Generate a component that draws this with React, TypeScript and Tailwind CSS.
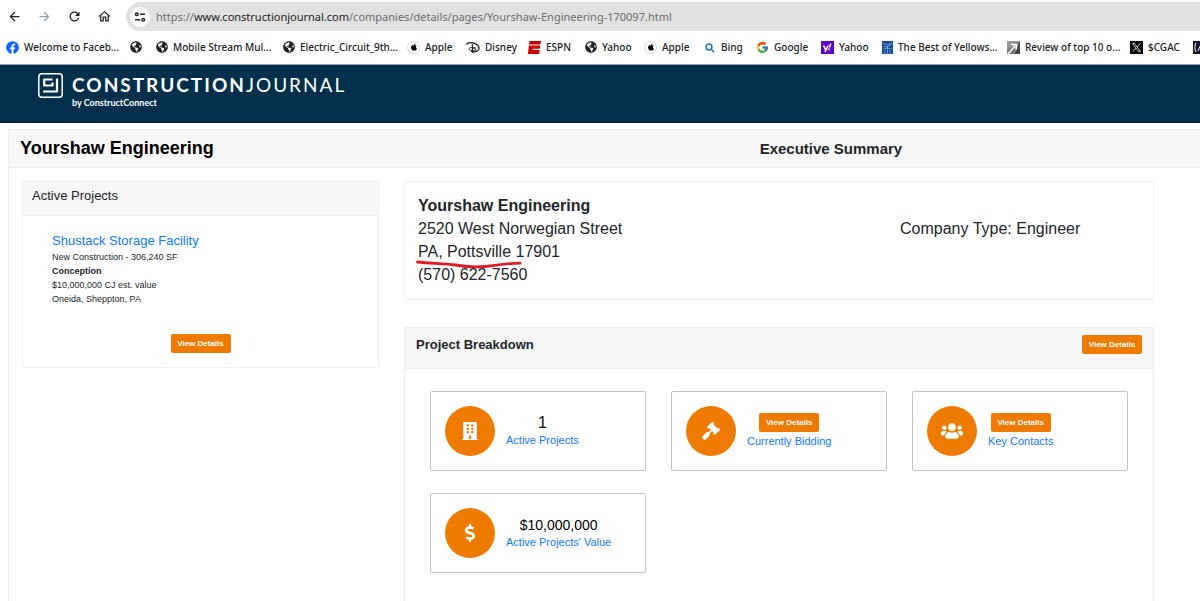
import type { ReactNode } from "react";
import { FaApple, FaBuilding, FaDollarSign, FaFacebook, FaGavel, FaGlobeAmericas, FaUsers } from "react-icons/fa";
import { FcGoogle } from "react-icons/fc";
import { MdArrowBack, MdArrowForward, MdOutlineHome, MdRefresh } from "react-icons/md";

const GlobeIcon = () => <FaGlobeAmericas className="size-3 text-[#202124]" />;

const AppleIcon = () => (
  <span className="flex size-[13px] items-center justify-center rounded-full border border-gray-300 bg-white">
    <FaApple className="size-2 text-black" />
  </span>
);

const DisneyIcon = () => (
  <svg viewBox="0 0 14 13" className="h-[13px] w-[14px]" fill="none" stroke="#222" strokeLinecap="round">
    <path d="M.7 3.2C1.5 1.2 6 1 9.2 2.6c3.4 1.700 4.600 4.200 3.300 6.200-1.300 1.900-4.600 2.700-6.700 1.700" strokeWidth="1.300" />
    <path d="M6.400 3.600v7.800" strokeWidth="1.300" />
    <path d="M9.500 7c-2-1-6.500-.8-6.500.9 0 1.300 2.700 2.200 4.800 1.900 1.700-.3 2.500-1 2-1.700-.4-.5-1.600-.5-2.600-.3" />
  </svg>
);

const EspnIcon = () => (
  <svg viewBox="0 0 13 13" className="size-[13px]" fill="#cc0000">
    <path d="M1.500 0H13l-.5 3.500H1Z" />
    <path d="M.9 4.500h11.400l-.5 3.300H4.900l-.2 1.200h7l-.5 4H0Z" />
  </svg>
);

const BingIcon = () => (
  <svg viewBox="0 0 12 13" className="h-[13px] w-3" fill="none" stroke="#1a73c8" strokeWidth="1.500" strokeLinecap="round">
    <circle cx="5" cy="6" r="2.900" />
    <path d="m7.300 8.300 2.400 2.400" />
  </svg>
);

const YahooIcon = () => (
  <svg viewBox="0 0 13 13" className="size-[13px]">
    <path d="M0 0h13v13H0Z" fill="#5f01d1" />
    <path d="m2.500 4.500 2 4M7 4.500l-3 6.500M9.800 2.500 8.400 6.500" stroke="#fff" strokeWidth="1.600" />
    <circle cx="7.800" cy="8.300" r="1" fill="#fff" />
  </svg>
);

const YellowstoneIcon = () => (
  <svg viewBox="0 0 11 13" className="h-[13px] w-[11px]">
    <path d="M0 0h11v13H0Z" fill="#174a94" />
    <path d="m1 2 4 2 5-2M1 5l4 1 5-3M1 8l4-1 5 1M3 13V9m2.500 4V5M8 13V9" fill="none" stroke="#8db7e3" strokeWidth=".7" />
  </svg>
);

const ReviewIcon = () => (
  <svg viewBox="0 0 13 13" className="size-[13px]">
    <path d="M0 0h13v13H0Z" fill="#777" />
    <path d="M0 0h13L0 9Z" fill="#999" />
    <path d="M13 0v13H8Z" fill="#444" />
    <path d="m1 13 7-8M4 3.500l5.500.2-.5 5" fill="none" stroke="#fff" strokeWidth="1.600" />
  </svg>
);

const XIcon = () => (
  <svg viewBox="0 0 13 13" className="size-[13px]" fill="none" stroke="#ddd">
    <path d="M0 0h13v13H0Z" fill="#000" stroke="none" />
    <path d="M2.500 2.500h2l6 8h-2Z" strokeWidth=".9" />
    <path d="m10.300 2.500-3.400 3.700M6 7.300l-3.300 3.200" />
  </svg>
);

const CodeIcon = () => (
  <svg viewBox="0 0 13 13" className="size-[13px]" fill="none" stroke="#fff">
    <path d="M0 0h13v13H0Z" fill="#15132b" stroke="none" />
    <path d="M3 2C1.500 4 1.500 9 3 11M5 10l3-7 3 7" />
  </svg>
);

const bookmarks: { label: string; icon: ReactNode; width: string }[] = [
  { label: "Welcome to Faceb...", icon: <FaFacebook className="size-[13px] text-[#0866ff]" />, width: "w-[124px]" },
  { label: "", icon: <GlobeIcon />, width: "w-[26px]" },
  { label: "Mobile Stream Mul...", icon: <GlobeIcon />, width: "w-[127px]" },
  { label: "Electric_Circuit_9th...", icon: <GlobeIcon />, width: "w-[124px]" },
  { label: "Apple", icon: <AppleIcon />, width: "w-[59px]" },
  { label: "Disney", icon: <DisneyIcon />, width: "w-[62px]" },
  { label: "ESPN", icon: <EspnIcon />, width: "w-[57px]" },
  { label: "Yahoo", icon: <GlobeIcon />, width: "w-[59px]" },
  { label: "Apple", icon: <AppleIcon />, width: "w-[60px]" },
  { label: "Bing", icon: <BingIcon />, width: "w-[52px]" },
  { label: "Google", icon: <FcGoogle className="size-[13px]" />, width: "w-[65px]" },
  { label: "Yahoo", icon: <YahooIcon />, width: "w-[61px]" },
  { label: "The Best of Yellows...", icon: <YellowstoneIcon />, width: "w-[125px]" },
  { label: "Review of top 10 o...", icon: <ReviewIcon />, width: "w-[123px]" },
  { label: "$CGAC", icon: <XIcon />, width: "w-[63px]" },
  { label: "", icon: <CodeIcon />, width: "w-[13px]" },
];

const BrowserBar = () => (
  <div className="overflow-hidden border-b border-gray-400 bg-white font-['Noto_Sans',sans-serif]">
    <div className="flex items-center pt-0.5">
      <div className="flex w-[126px] shrink-0 items-center gap-[15px] pl-[7px] text-[#202124]">
        <button aria-label="Back"><MdArrowBack className="size-[15px]" /></button>
        <button aria-label="Forward" className="text-gray-400"><MdArrowForward className="size-[15px]" /></button>
        <button aria-label="Reload"><MdRefresh className="size-[15px]" /></button>
        <button aria-label="Home"><MdOutlineHome className="size-[15px]" /></button>
      </div>
      <div className="flex h-[29px] flex-1 items-center gap-[6px] rounded-l-full bg-[#e1e1e1] pl-1">
        <button aria-label="Site information" className="flex size-5 shrink-0 items-center justify-center rounded-full bg-white">
          <svg viewBox="0 0 12 12" className="size-3" fill="none" stroke="#222" strokeWidth="1.400">
            <circle cx="2.800" cy="3.300" r="1.300" />
            <path d="M6 3.300h5M1 8.700h5" />
            <circle cx="9.200" cy="8.700" r="1.300" />
          </svg>
        </button>
        <p className="whitespace-nowrap text-[11px] leading-4 text-[#6b6b6b]">
          https://<span className="text-[#202124]">www.constructionjournal.com</span>
          /companies/details/pages/Yourshaw-Engineering-170097.html
        </p>
      </div>
    </div>
    <nav className="mb-px flex h-8 items-center pl-1.5">
      {bookmarks.map((b, i) => (
        <a key={i} href="#" aria-label={b.label || "Bookmark"} className={`flex shrink-0 items-center gap-[5px] ${b.width}`}>
          <span className="shrink-0">{b.icon}</span>
          <span className="whitespace-nowrap text-[10px] font-medium leading-4 text-[#202124]">{b.label}</span>
        </a>
      ))}
    </nav>
  </div>
);

const SiteHeader = () => (
  <header className="flex h-[58px] gap-[9px] border-b border-[#001f38] bg-[#02304a] pl-[38px] pt-2 text-white">
    <svg viewBox="0 0 25 25" className="size-[25px] shrink-0" fill="none" stroke="#fff">
      <rect x=".8" y=".8" width="23.400" height="23.400" rx="3" strokeWidth="1.500" />
      <path d="M14.500 6.500H6.200v6h8.300V9.500M19 5.500v13H5.200" strokeWidth="2.200" strokeLinejoin="round" />
    </svg>
    <div className="font-[Lato,sans-serif]">
      <p className="whitespace-nowrap text-[19px] leading-6 tracking-[2px]">
        <span className="font-bold">CONSTRUCTION</span>JOURNAL
      </p>
      <p className="text-[9px] font-bold leading-3">by ConstructConnect</p>
    </div>
  </header>
);

const ViewDetails = () => (
  <button className="h-[19px] w-[60px] rounded-xs bg-[#ee7a00] text-[8px] font-bold leading-4 text-white">
    View Details
  </button>
);

const Tile = ({ icon, label, children }: { icon: ReactNode; label: string; children: ReactNode }) => (
  <div className="flex h-20 items-center gap-[11px] rounded-xs border border-[#c4c4c4] pl-3.5">
    <span className="flex size-[50px] shrink-0 items-center justify-center rounded-full bg-[#ee7a00] text-white">
      {icon}
    </span>
    <div className="flex flex-col items-center gap-px">
      {children}
      <a href="#" className="whitespace-nowrap text-[11px] leading-4 text-[#0d7bff]">{label}</a>
    </div>
  </div>
);

const App = () => {
  return (
    <div className="overflow-hidden bg-white font-['Liberation_Sans',Arial,sans-serif] text-[#212529]">
      <BrowserBar />
      <SiteHeader />
      <main className="ml-2 mt-1.5 min-h-[473px] border-l border-t border-[#ececec]">
        <div className="grid grid-cols-[739fr_440fr] items-center border-b border-[#ececec] bg-[#f7f7f7] pl-[11px] leading-[37px]">
          <h1 className="text-[18px] font-bold text-black">Yourshaw Engineering</h1>
          <h2 className="text-[15px] font-bold">Executive Summary</h2>
        </div>

        <div className="grid grid-cols-[357fr_750fr] items-start gap-[25px] pl-[13px] pr-[46px] pt-[13px]">
          <section className="border border-[#f0f0f0]">
            <h3 className="h-[34px] border-b border-[#ececec] bg-[#f7f7f7] pl-[9px] text-[13px] leading-7">Active Projects</h3>
            <div className="px-[29px] pt-4 text-[9px] leading-[14px]">
              <a href="#" className="text-[13px] leading-[18px] text-[#0d7bff]">Shustack Storage Facility</a>
              <p>New Construction - 306,240 SF</p>
              <p className="font-bold">Conception</p>
              <p>$10,000,000 CJ est. value</p>
              <p>Oneida, Sheppton, PA</p>
            </div>
            <div className="flex justify-center pb-3.5 pt-7">
              <ViewDetails />
            </div>
          </section>

          <div>
            <section className="grid grid-cols-[482fr_240fr] border border-[#f0f0f0] px-[13px] pb-[13px] pt-3 text-[16px] leading-[23px]">
              <div>
                <p className="font-bold">Yourshaw Engineering</p>
                <p>2520 West Norwegian Street</p>
                <p className="relative">
                  PA, Pottsville 17901
                  {/* pen stroke under the town */}
                  <svg viewBox="0 0 106 9" className="absolute -left-0.5 top-5 h-[9px] w-[106px]" fill="none" stroke="#e01a22" strokeWidth="2.800" strokeLinecap="round">
                    <path d="M1.500 2c12 1.500 26 1.300 38 3 8 1.500 18 2.300 30 1.500 12-1 16-3 34.500-3.300" />
                  </svg>
                </p>
                <p>(570) 622-7560</p>
              </div>
              <p className="whitespace-nowrap pt-[23px]">Company Type: Engineer</p>
            </section>

            <section className="mt-[27px] min-h-[274px] border border-b-0 border-[#ececec]">
              <div className="flex h-[41px] items-start justify-between border-b border-[#ececec] bg-[#f7f7f7] px-[11px] pt-[7px]">
                <h3 className="text-[13px] font-bold leading-5">Project Breakdown</h3>
                <ViewDetails />
              </div>
              <div className="grid grid-cols-3 gap-x-[25px] gap-y-[22px] px-[25px] pt-[22px]">
                <Tile icon={<FaBuilding className="size-[18px]" />} label="Active Projects">
                  <span className="text-[16px] leading-4 text-black">1</span>
                </Tile>
                <Tile icon={<FaGavel className="size-[18px]" />} label="Currently Bidding">
                  <ViewDetails />
                </Tile>
                <Tile icon={<FaUsers className="size-[22px]" />} label="Key Contacts">
                  <ViewDetails />
                </Tile>
                <Tile icon={<FaDollarSign className="size-[18px]" />} label="Active Projects' Value">
                  <span className="text-[14px] leading-4 text-black">$10,000,000</span>
                </Tile>
              </div>
            </section>
          </div>
        </div>
      </main>
    </div>
  );
};

export default App;
